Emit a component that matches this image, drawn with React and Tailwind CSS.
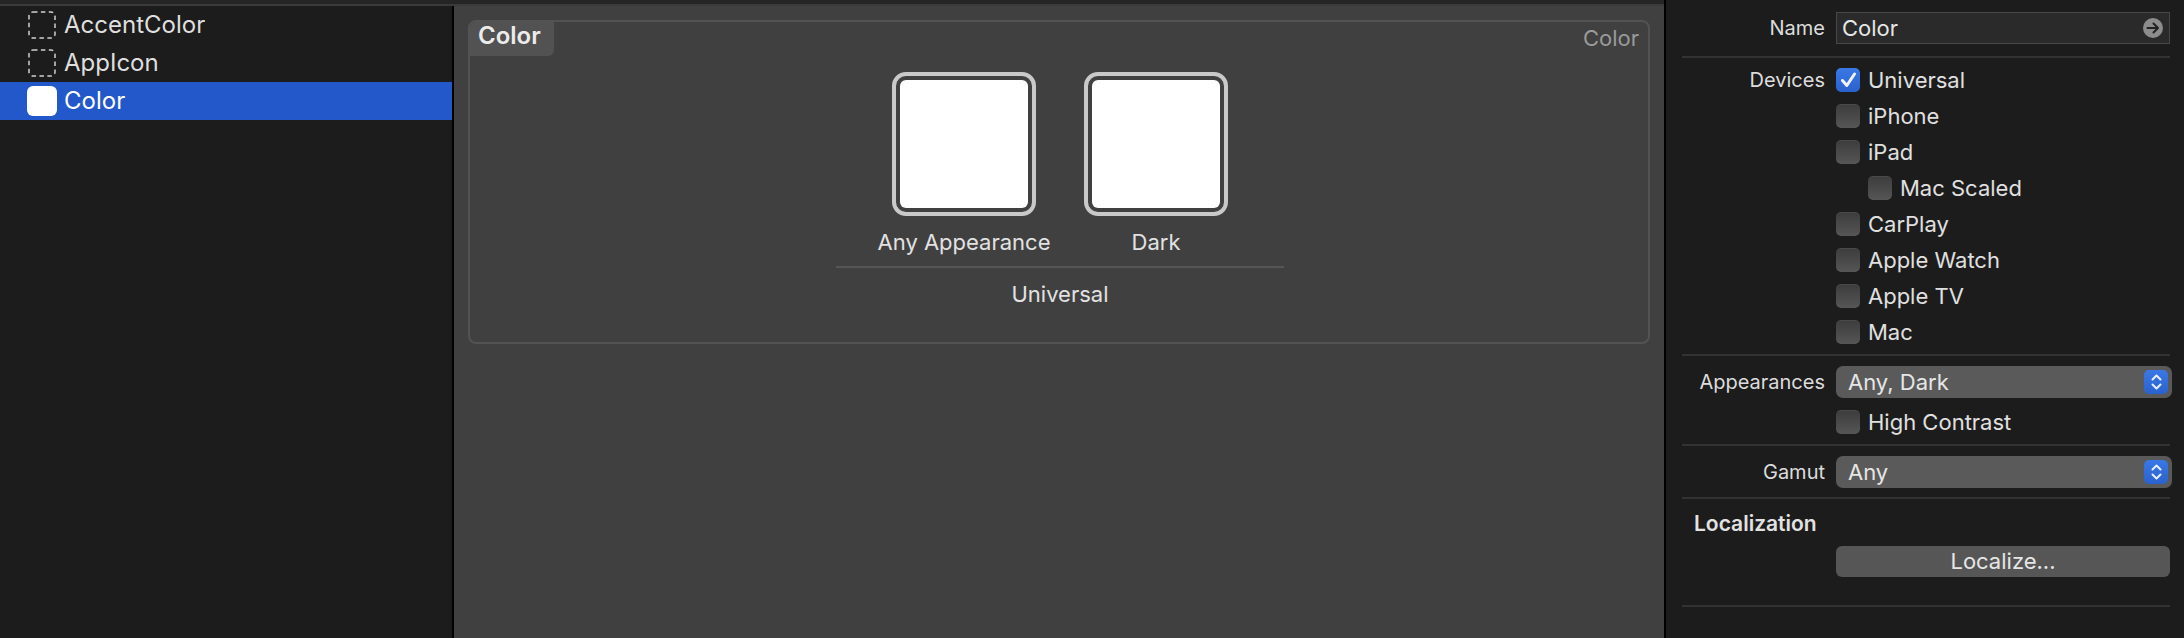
import React from 'react';

const font = "font-['Inter','Liberation_Sans',sans-serif]";

const Divider = ({ className = '' }) => <div className={`h-[2px] bg-[#323232] ${className}`} />;

const DashedIcon = () => (
    <svg width="28" height="28" viewBox="0 0 28 28" fill="none">
        <rect x="1" y="1" width="26" height="26" rx="4" stroke="#cfcfcf" strokeWidth="1.5" strokeDasharray="4.5 3.4" />
    </svg>
);

const Asset = ({ name, icon, selected }) => (
    <div className={`flex items-center h-[38px] pl-[28px] gap-[8px] text-[24px] ${selected ? 'bg-[#2358ca] text-white' : 'text-[#dfdfdf]'}`}>
        {icon}
        <span>{name}</span>
    </div>
);

const Swatch = ({ label }) => (
    <div className="flex flex-col items-center w-[144px]">
        <div className="w-[144px] h-[144px] rounded-[14px] border-[4px] border-[#c9c9c9] p-[4px]">
            <div className="w-full h-full rounded-[6px] bg-white" />
        </div>
        <span className="mt-[12px] leading-[28px] whitespace-nowrap text-[#e2e2e2]">{label}</span>
    </div>
);

const Label = ({ children }) => (
    <div className="w-[143px] shrink-0 text-right text-[20px] text-[#dcdcdc]">{children}</div>
);

const Check = ({ label, checked, indent }) => (
    <div className={`flex items-center h-[36px] gap-[8px] ${indent ? 'pl-[32px]' : ''}`}>
        {checked ? (
            <div className="w-[24px] h-[24px] rounded-[5px] bg-gradient-to-b from-[#3a78e6] to-[#2a62cd] flex items-center justify-center">
                <svg width="17" height="16" viewBox="0 0 17 16" fill="none">
                    <path d="M2.5 8.5 L6.8 13.5 L14.5 2" stroke="#eef3fd" strokeWidth="3" strokeLinecap="round" strokeLinejoin="round" />
                </svg>
            </div>
        ) : (
            <div className="w-[24px] h-[24px] rounded-[5px] bg-gradient-to-b from-[#3d3d3d] to-[#565656] border-t border-[#4a4a4a]" />
        )}
        <span className="text-[#e0e0e0]">{label}</span>
    </div>
);

const Select = ({ value }) => (
    <div className="flex-1 -mr-[2px] h-[32px] rounded-[7px] bg-[#5a5a5a] flex items-center justify-between pl-[12px] pr-[4px]">
        <span className="text-[#e6e6e6]">{value}</span>
        <div className="w-[24px] h-[24px] rounded-[5px] bg-gradient-to-b from-[#3a78e6] to-[#2a62cd] flex items-center justify-center">
            <svg width="13" height="18" viewBox="0 0 13 18" fill="none">
                <path d="M2.5 6.5 L6.5 2.5 L10.5 6.5 M2.5 11.5 L6.5 15.5 L10.5 11.5" stroke="#e8effc" strokeWidth="2" strokeLinecap="round" strokeLinejoin="round" />
            </svg>
        </div>
    </div>
);

export default function App() {
    return (
        <div className={`flex w-[2184px] h-[638px] overflow-hidden bg-black text-[22px] ${font}`}>
            <div className="w-[1664px] shrink-0 flex flex-col">
                <div className="h-[4px] bg-[#252525]" />
                <div className="h-[2px] bg-[#3a3a3a]" />
                <div className="flex flex-1 min-h-0">
                    {/* asset list */}
                    <div className="w-[452px] shrink-0 bg-[#1c1c1c]">
                        <Asset name="AccentColor" icon={<DashedIcon />} />
                        <Asset name="AppIcon" icon={<DashedIcon />} />
                        <Asset
                            name="Color"
                            selected
                            icon={<div className="w-[30px] h-[30px] -ml-[1px] -mr-[1px] rounded-[6px] bg-white" />}
                        />
                    </div>
                    <div className="w-[2px] shrink-0 bg-black" />

                    {/* color set editor */}
                    <div className="flex-1 bg-[#404040] px-[14px] pt-[14px]">
                        <div className="h-[324px] rounded-[8px] border-[2px] border-[#535353]">
                            <div className="flex justify-between h-[34px]">
                                <div className="w-[84px] rounded-br-[6px] rounded-tl-[6px] bg-[#525252] pl-[8px] leading-[28px] text-[24px] font-semibold text-[#ececec]">
                                    Color
                                </div>
                                <span className="pr-[9px] leading-[32px] text-[#9a9a9a]">Color</span>
                            </div>
                            <div className="ml-[366px] mt-[16px] w-[448px] flex flex-col items-center">
                                <div className="flex gap-[48px]">
                                    <Swatch label="Any Appearance" />
                                    <Swatch label="Dark" />
                                </div>
                                <Divider className="w-full mt-[10px] !bg-[#555555]" />
                                <span className="mt-[12px] leading-[28px] text-[#e2e2e2]">Universal</span>
                            </div>
                        </div>
                    </div>
                </div>
            </div>
            <div className="w-[2px] shrink-0 bg-black" />

            {/* inspector */}
            <div className="flex-1 bg-[#1c1c1c] pl-[16px] pr-[14px] pt-[12px]">
                <div className="flex items-center gap-[11px] h-[32px]">
                    <Label>Name</Label>
                    <div className="flex-1 h-[32px] bg-[#2a2a2a] border border-[#474747] flex items-center justify-between pl-[5px] pr-[6px]">
                        <span className="text-[#e6e6e6]">Color</span>
                        <svg width="20" height="20" viewBox="0 0 20 20" fill="none">
                            <circle cx="10" cy="10" r="10" fill="#8c8c8c" />
                            <path d="M4.5 10 H15 M10.5 5.5 L15 10 L10.5 14.5" stroke="#222222" strokeWidth="2" strokeLinecap="round" strokeLinejoin="round" />
                        </svg>
                    </div>
                </div>
                <Divider className="mt-[12px]" />
                <div className="flex gap-[11px] mt-[4px]">
                    <div className="h-[36px] flex items-center"><Label>Devices</Label></div>
                    <div className="flex-1">
                        <Check label="Universal" checked />
                        <Check label="iPhone" />
                        <Check label="iPad" />
                        <Check label="Mac Scaled" indent />
                        <Check label="CarPlay" />
                        <Check label="Apple Watch" />
                        <Check label="Apple TV" />
                        <Check label="Mac" />
                    </div>
                </div>
                <Divider className="mt-[4px]" />
                <div className="flex items-center gap-[11px] mt-[10px]">
                    <Label>Appearances</Label>
                    <Select value="Any, Dark" />
                </div>
                <div className="pl-[154px] mt-[6px]">
                    <Check label="High Contrast" />
                </div>
                <Divider className="mt-[4px]" />
                <div className="flex items-center gap-[11px] mt-[10px]">
                    <Label>Gamut</Label>
                    <Select value="Any" />
                </div>
                <Divider className="mt-[9px]" />
                <div className="pl-[12px] mt-[11px] leading-[28px] text-[21px] font-semibold text-[#e2e2e2]">Localization</div>
                <div className="pl-[154px] mt-[8px]">
                    <div className="h-[31px] rounded-[6px] bg-[#565656] flex items-center justify-center text-[#e6e6e6]">
                        Localize...
                    </div>
                </div>
                <Divider className="mt-[28px]" />
            </div>
        </div>
    );
}
